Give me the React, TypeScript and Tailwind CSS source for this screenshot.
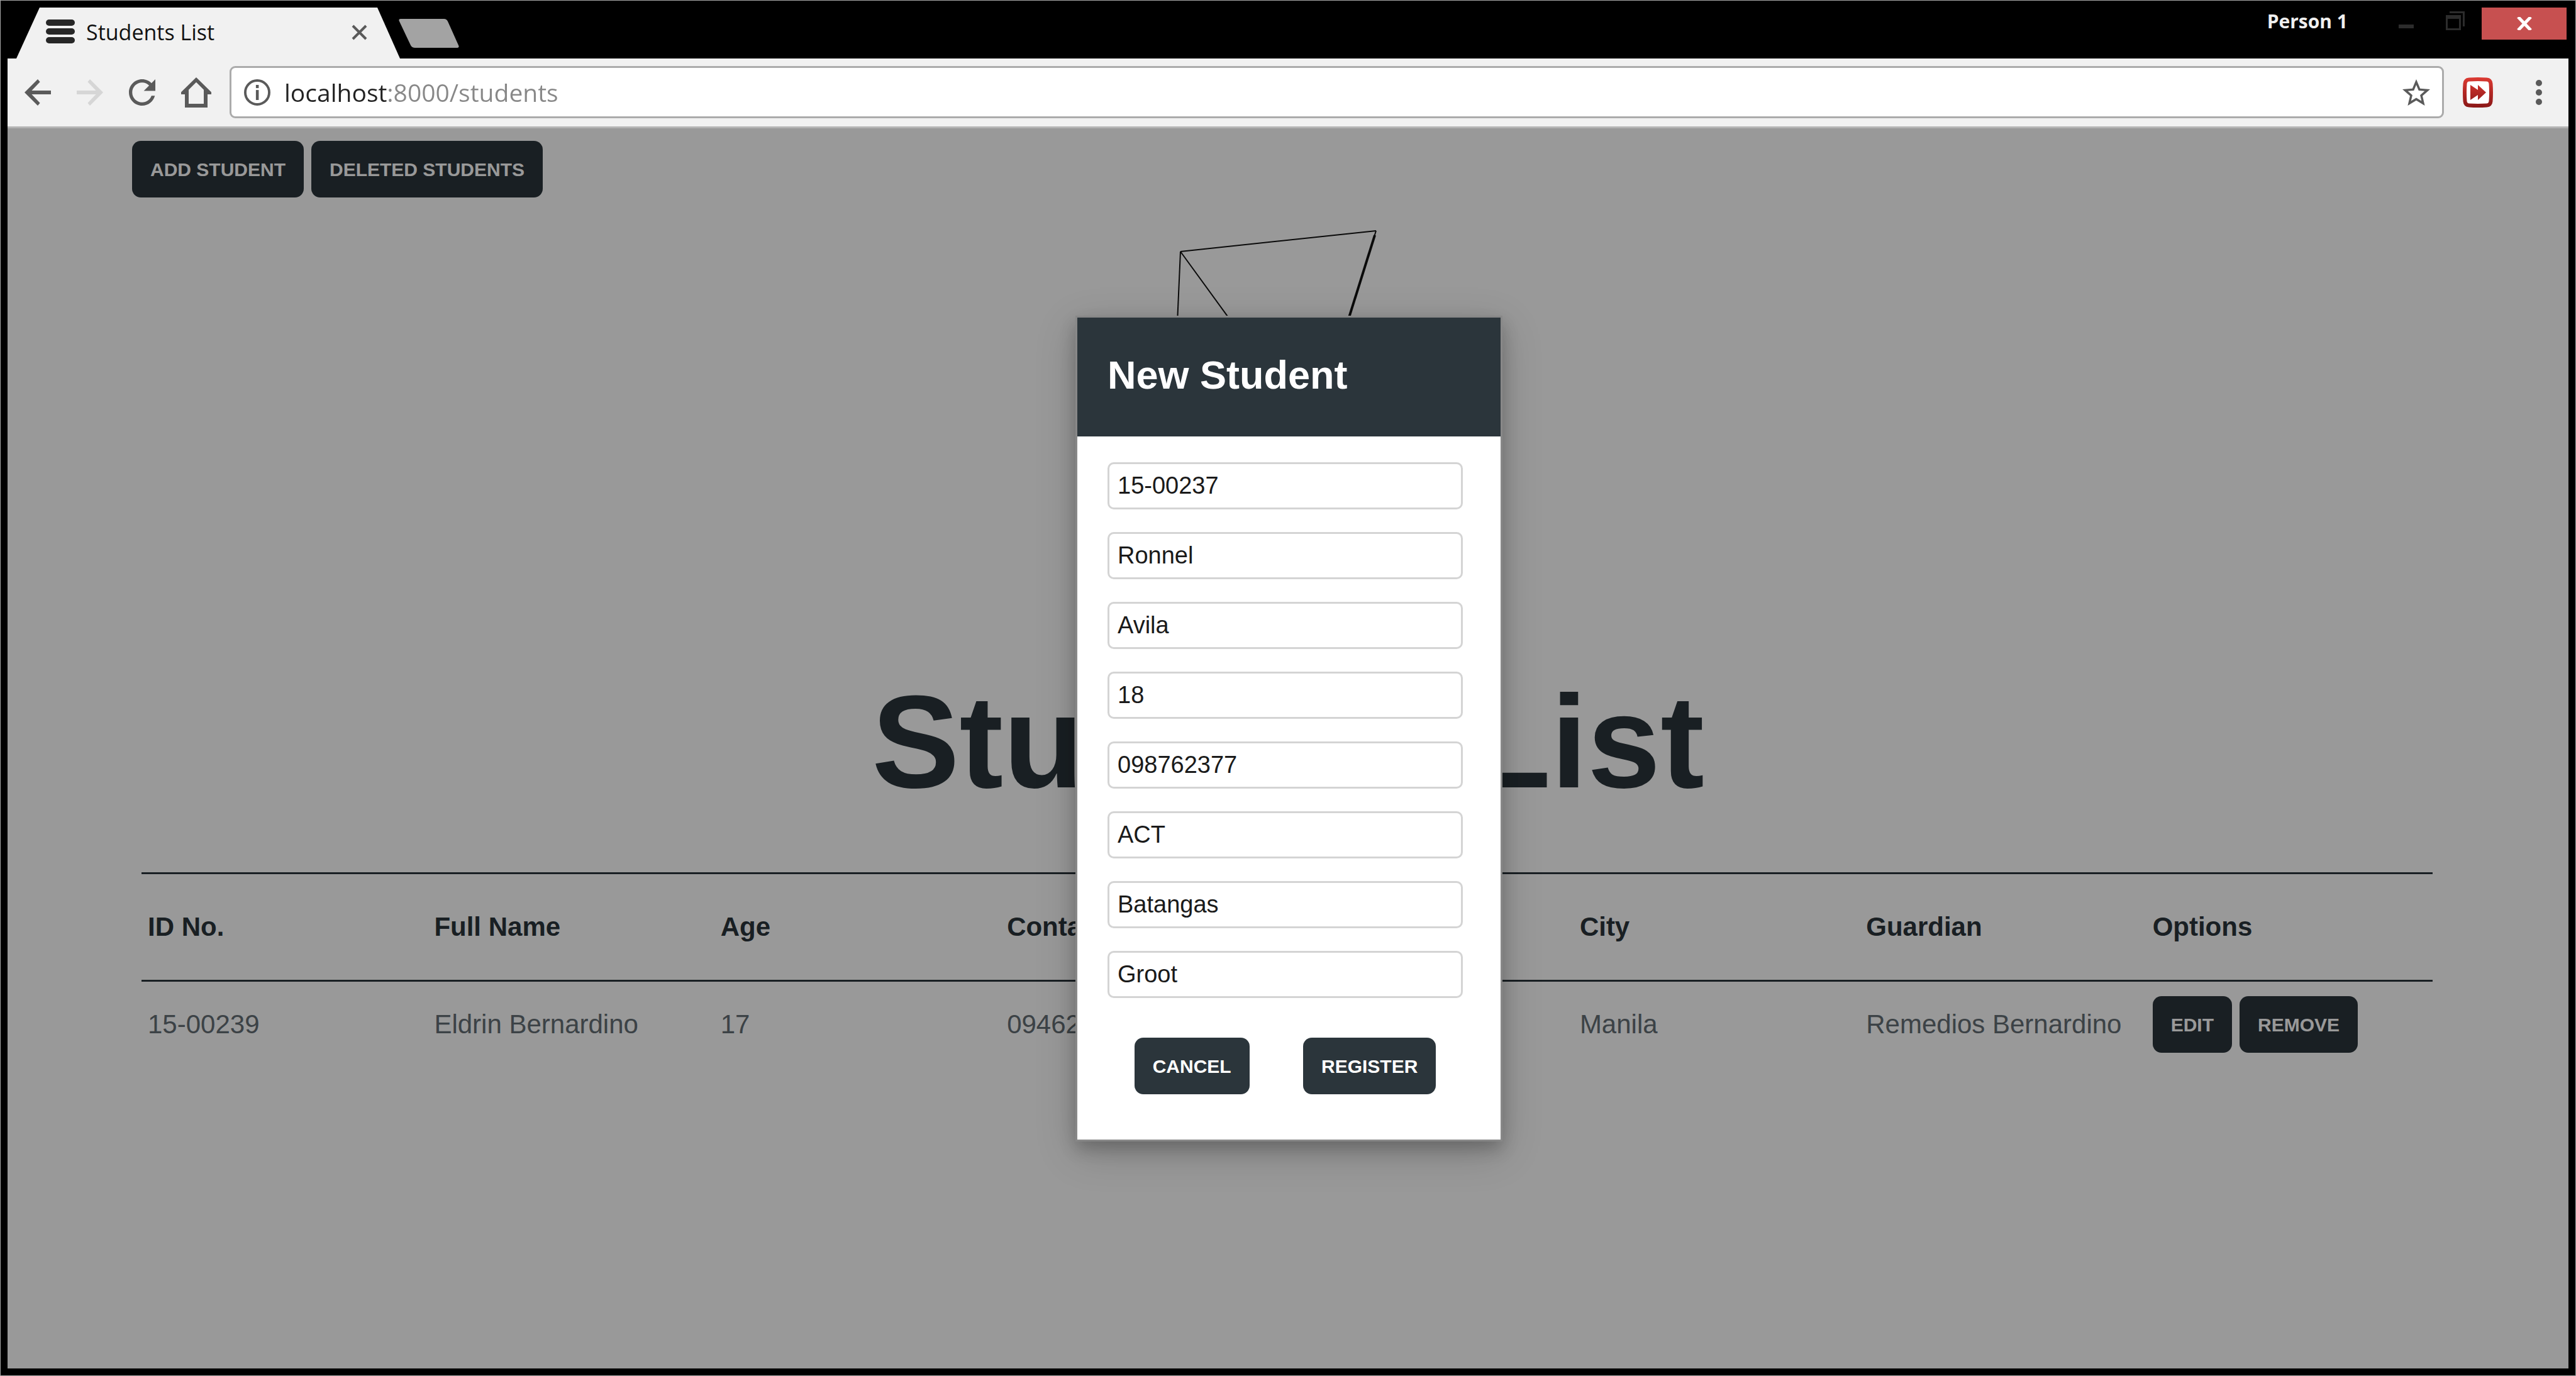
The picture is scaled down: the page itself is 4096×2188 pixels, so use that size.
import React from "react";

const sans = "font-['Liberation_Sans',Arial,sans-serif]";
const chromeFont = "font-['Open_Sans','Noto_Sans',sans-serif]";

function DarkButton({ children }: { children: React.ReactNode }) {
  return (
    <button
      type="button"
      className="h-[90px] shrink-0 rounded-[14px] bg-[#2b353b] px-[29px] text-[30px] leading-[89px] font-bold whitespace-nowrap text-white uppercase"
    >
      {children}
    </button>
  );
}

function TitleBar() {
  return (
    <header className={`flex h-[81px] items-start justify-between pr-[3px] pl-[14px] ${chromeFont}`}>
      <div className="flex h-full items-start">
        <div className="flex h-full w-[610px] items-start bg-[#f1f1f1] pt-[12px] pr-[52px] pl-[47px] [clip-path:polygon(37px_0,574px_0,610px_100%,0_100%)]">
          <svg viewBox="0 0 46 54" className="h-[54px] w-[46px] shrink-0" fill="#272727" aria-hidden="true">
            <rect x="0" y="7" width="46" height="10" rx="5" />
            <rect x="0" y="21" width="46" height="10" rx="5" />
            <rect x="0" y="35" width="46" height="10" rx="5" />
          </svg>
          <span className="ml-[18px] flex-1 text-[34px] leading-[54px] whitespace-nowrap text-[#111]">Students List</span>
          <button type="button" aria-label="Close tab" className="mt-[15px] size-[25px] shrink-0">
            <svg viewBox="0 0 25 25" className="size-full" stroke="#5a5a5a" strokeWidth="4" aria-hidden="true">
              <path d="M2 2L23 23M23 2L2 23" />
            </svg>
          </button>
        </div>
        <button type="button" aria-label="New tab" className="mt-[18px] -ml-[2px] h-[46px] w-[96px]">
          <svg viewBox="0 0 96 46" className="size-full" fill="#a3a3a3" aria-hidden="true">
            <path d="M3 0H72Q76 0 78 4L95 42Q97 46 92 46H26Q21 46 19 42L1 4Q-1 0 3 0Z" />
          </svg>
        </button>
      </div>
      <div className="flex items-start">
        <span className="mr-[81px] text-[30px] leading-[44px] font-bold text-[#efefef]">Person 1</span>
        <button type="button" aria-label="Minimize" className="mt-[6px] mr-[51px] h-[30px] w-[24px]">
          <svg viewBox="0 0 24 30" className="size-full" fill="#2c2c2c" aria-hidden="true">
            <rect x="0" y="21" width="24" height="6" />
          </svg>
        </button>
        <button type="button" aria-label="Restore" className="mt-[6px] mr-[27px] size-[30px]">
          <svg viewBox="0 0 10 10" className="size-full" fill="#2c2c2c" aria-hidden="true">
            <path d="M2 0H10V8H9V1H2Z" />
            <path fillRule="evenodd" d="M0 2H8V10H0ZM1 4V9H7V4Z" />
          </svg>
        </button>
        <button type="button" aria-label="Close window" className="flex h-[51px] w-[135px] items-center justify-center bg-[#c75050]">
          <svg viewBox="0 0 24 21" className="h-[21px] w-[24px]" stroke="#fff" strokeWidth="5" aria-hidden="true">
            <path d="M2 0L22 21M22 0L2 21" />
          </svg>
        </button>
      </div>
    </header>
  );
}

function NavBar() {
  return (
    <nav
      className={`flex items-center border-b-[3px] border-[#b4b4b4] bg-[#f1f1f1] pt-[12px] pr-[42px] pb-[13px] pl-[27px] ${chromeFont}`}
    >
      <div className="flex items-center gap-[41px]">
        <button type="button" aria-label="Back" className="size-[42px]">
          <svg viewBox="0 0 14 14" className="size-full" fill="#5a5a5a" aria-hidden="true">
            <path d="M14 6H3.8L8.2 1.4 7 0 0 7l7 7 1.2-1.4L3.8 8H14z" />
          </svg>
        </button>
        <button type="button" aria-label="Forward" className="size-[42px]">
          <svg viewBox="0 0 14 14" className="size-full" fill="#d6d6d6" aria-hidden="true">
            <path d="M0 6h10.2L5.8 1.4 7 0l7 7-7 7-1.2-1.4L10.2 8H0z" />
          </svg>
        </button>
        <button type="button" aria-label="Reload" className="size-[42px]">
          <svg viewBox="4 4 16 16" className="size-full" fill="#5a5a5a" aria-hidden="true">
            <path d="M17.65 6.35C16.2 4.9 14.21 4 12 4c-4.42 0-7.99 3.58-7.99 8s3.57 8 7.99 8c3.73 0 6.84-2.55 7.73-6h-2.08c-.82 2.33-3.04 4-5.65 4-3.31 0-6-2.69-6-6s2.69-6 6-6c1.66 0 3.14.69 4.22 1.78L13 11h7V4l-2.35 2.35z" />
          </svg>
        </button>
        <button type="button" aria-label="Home" className="size-[48px]">
          <svg viewBox="0 0 16 16" className="size-full" fill="#5a5a5a" aria-hidden="true">
            <path fillRule="evenodd" d="M8 0L0 7.8V9H2V16H14V9H16V7.8ZM8 2.6L12 6.6V14H4V6.6Z" />
          </svg>
        </button>
      </div>
      <div className="mr-[30px] ml-[29px] flex h-[83px] flex-1 items-center rounded-[9px] border-[3px] border-[#ababab] bg-white pr-[19px] pl-[20px]">
        <svg viewBox="0 0 14 14" className="size-[42px] shrink-0" fill="#5a5a5a" aria-hidden="true">
          <circle cx="7" cy="7" r="6.35" fill="none" stroke="#5a5a5a" strokeWidth="1.3" />
          <rect x="6.3" y="3" width="1.5" height="1.7" />
          <rect x="6.3" y="5.7" width="1.5" height="5.3" />
        </svg>
        <input
          type="text"
          aria-label="Address"
          defaultValue="localhost:8000/students"
          className="ml-[22px] min-w-0 flex-1 bg-[linear-gradient(to_right,#222_164px,#888_164px)] bg-clip-text text-[39px] leading-[54px] text-transparent outline-none"
        />
        <button type="button" aria-label="Bookmark this page" className="h-[42px] w-[44px] shrink-0">
          <svg viewBox="2 2 20 19" className="size-full" fill="#5a5a5a" aria-hidden="true">
            <path d="M22 9.24l-7.19-.62L12 2 9.19 8.63 2 9.24l5.46 4.73L5.82 21 12 17.27 18.18 21l-1.63-7.03L22 9.24zM12 15.4l-3.76 2.27 1-4.28-3.32-2.88 4.38-.38L12 6.1l1.71 4.04 4.38.38-3.32 2.88 1 4.28L12 15.4z" />
          </svg>
        </button>
      </div>
      <button type="button" aria-label="Fast forward extension" className="size-[48px] shrink-0">
        <svg viewBox="0 0 48 48" className="size-full" aria-hidden="true">
          <defs>
            <linearGradient id="ffRed" x1="0" y1="0" x2="0" y2="48" gradientUnits="userSpaceOnUse">
              <stop offset="0" stopColor="#dc3a32" />
              <stop offset="1" stopColor="#8a1717" />
            </linearGradient>
          </defs>
          <path
            d="M10 3.5Q24 2.5 38 3.5Q44 4 44.5 10Q45.5 24 44.5 38Q44 44 38 44.5Q24 45.5 10 44.5Q4 44 3.5 38Q2.5 24 3.5 10Q4 4 10 3.5Z"
            fill="#fff"
            stroke="url(#ffRed)"
            strokeWidth="6"
          />
          <path d="M12 12L24 20V12L37 24L24 36V28L12 36Z" fill="url(#ffRed)" />
        </svg>
      </button>
      <button type="button" aria-label="Menu" className="ml-[68px] h-[40px] w-[10px] shrink-0">
        <svg viewBox="0 0 10 40" className="size-full" fill="#5a5a5a" aria-hidden="true">
          <circle cx="5" cy="5" r="5" />
          <circle cx="5" cy="20" r="5" />
          <circle cx="5" cy="35" r="5" />
        </svg>
      </button>
    </nav>
  );
}

const columns = ["ID No.", "Full Name", "Age", "Contact", "Course", "City", "Guardian", "Options"];
const student = ["15-00239", "Eldrin Bernardino", "17", "09462", "ACT", "Manila", "Remedios Bernardino"];

function StudentsPage() {
  return (
    <div>
      <div className="flex gap-[12px] pt-[20px] pl-[198px]">
        <DarkButton>Add Student</DarkButton>
        <DarkButton>Deleted Students</DarkButton>
      </div>
      <svg viewBox="0 0 900 740" className="mx-auto h-[740px] w-[900px]" fill="none" stroke="#111" strokeWidth="2" aria-hidden="true">
        <path d="M279 86L590 53" />
        <path d="M279 86L270 290" />
        <path d="M279 86L426 288" />
        <path d="M590 53L508 314" />
        <path d="M588 60L546 194" strokeWidth="4" />
      </svg>
      <h1 className="text-center text-[209px] leading-[252px] font-bold text-[#2b353b]">Students List</h1>
      <div className="mt-[81px] pr-[216px] pl-[213px]">
        <table className="w-full table-fixed border-separate border-spacing-0 text-left text-[42px] leading-[60px]">
          <thead>
            <tr>
              {columns.map((c) => (
                <th key={c} scope="col" className="border-y-[3px] border-[#2b353b] py-[54px] pl-[10px] font-bold text-[#2b353b]">
                  {c}
                </th>
              ))}
            </tr>
          </thead>
          <tbody>
            <tr>
              {student.map((v) => (
                <td key={v} className="py-[23px] pl-[10px] align-middle whitespace-nowrap text-[#646e75]">
                  {v}
                </td>
              ))}
              <td className="py-[23px] pl-[10px]">
                <div className="flex gap-[12px]">
                  <DarkButton>Edit</DarkButton>
                  <DarkButton>Remove</DarkButton>
                </div>
              </td>
            </tr>
          </tbody>
        </table>
      </div>
    </div>
  );
}

const fields = [
  ["Student ID", "15-00237"],
  ["First name", "Ronnel"],
  ["Last name", "Avila"],
  ["Age", "18"],
  ["Contact", "098762377"],
  ["Course", "ACT"],
  ["City", "Batangas"],
  ["Guardian", "Groot"],
];

function NewStudentDialog() {
  return (
    <div className="absolute inset-0 flex items-start justify-center bg-black/40 pt-[298px] pl-[3px]">
      <div
        role="dialog"
        aria-label="New Student"
        className="w-[679px] border-[3px] border-[#888] bg-white shadow-[0_12px_24px_0_rgba(0,0,0,0.2),0_18px_60px_0_rgba(0,0,0,0.19)]"
      >
        <div className="bg-[#2b353b] px-[48px] pt-[54px] pb-[60px]">
          <h2 className="text-[63px] leading-[75px] font-bold text-white">New Student</h2>
        </div>
        <form className="pt-[41px] pr-[60px] pb-[72px] pl-[48px]">
          <div className="flex flex-col gap-[36px]">
            {fields.map(([label, value]) => (
              <input
                key={label}
                type="text"
                aria-label={label}
                defaultValue={value}
                className="h-[75px] w-full rounded-[10px] border-[3px] border-[#d4d4d4] bg-white px-[13px] text-[38px] leading-[48px] text-[#1a1a1a] outline-none"
              />
            ))}
          </div>
          <div className="mt-[63px] flex justify-around">
            <DarkButton>Cancel</DarkButton>
            <DarkButton>Register</DarkButton>
          </div>
        </form>
      </div>
    </div>
  );
}

export default function App() {
  return (
    <div className={`flex min-h-screen flex-col border border-[#a8a8a8] bg-black p-[11px] ${sans}`}>
      <TitleBar />
      <NavBar />
      <main className="relative flex-1 bg-white">
        <StudentsPage />
        <NewStudentDialog />
      </main>
    </div>
  );
}
